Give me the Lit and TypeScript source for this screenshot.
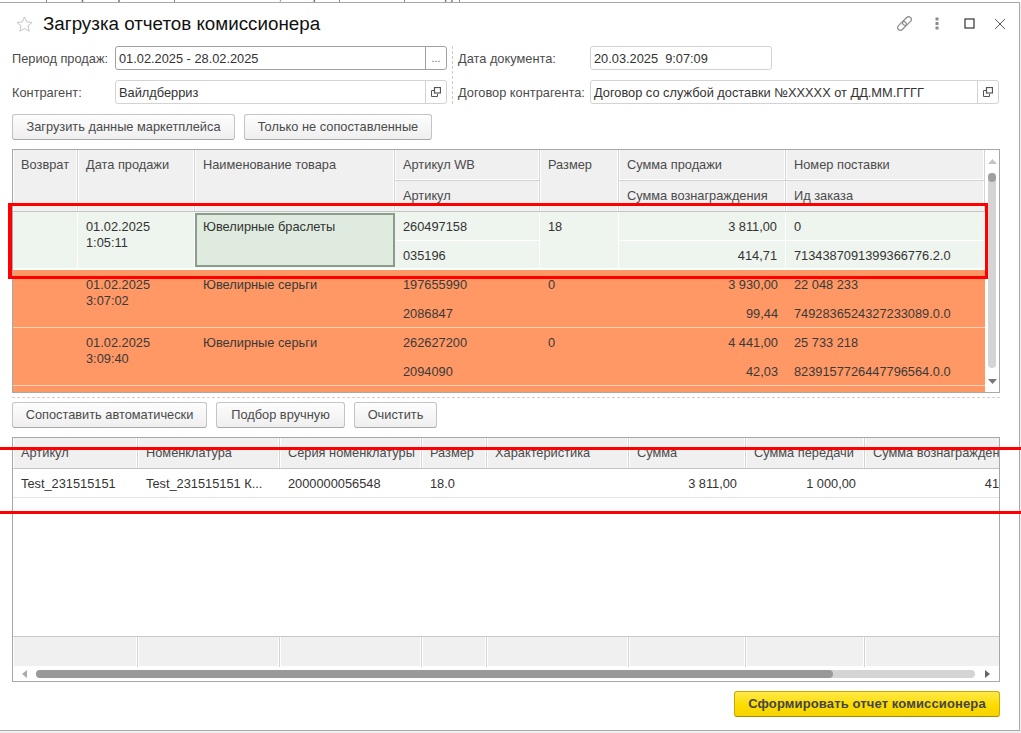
import { LitElement, html, css, svg } from "lit";
import { customElement } from "lit/decorators.js";

const COLS1 = [65, 117, 200, 145, 79, 167, 199];
const COLS2 = [125, 142, 142, 65, 142, 117, 119, 168];

type Row = { date: [string, string]; name: string; a: string; b: string; size: string; s1: string; s2: string; n: string; id: string; cls: string };
const ROWS: Row[] = [
  { date: ["01.02.2025", "1:05:11"], name: "Ювелирные браслеты", a: "260497158", b: "035196", size: "18", s1: "3 811,00", s2: "414,71", n: "0", id: "7134387091399366776.2.0", cls: "sel" },
  { date: ["01.02.2025", "3:07:02"], name: "Ювелирные серьги", a: "197655990", b: "2086847", size: "0", s1: "3 930,00", s2: "99,44", n: "22 048 233", id: "7492836524327233089.0.0", cls: "or" },
  { date: ["01.02.2025", "3:09:40"], name: "Ювелирные серьги", a: "262627200", b: "2094090", size: "0", s1: "4 441,00", s2: "42,03", n: "25 733 218", id: "8239157726447796564.0.0", cls: "or" },
];

const openIcon = svg`<svg width="10" height="10" viewBox="0 0 10 10" fill="none" stroke="#555" stroke-width="1"><rect x="3.5" y="0.5" width="6" height="5.5" stroke-width="1.2"/><path d="M3 3.5H0.5V9.5H6.5V7"/></svg>`;

@customElement("app-root")
export class AppRoot extends LitElement {
  static styles = css`
    :host { display: block; width: 1021px; height: 733px; overflow: hidden; position: relative; background: #f0f0f0; font: 12.8px/16px "Liberation Sans", Arial, sans-serif; color: #4b4b4b; }
    * { box-sizing: border-box; }
    .tabs { height: 2px; background: #fff; overflow: hidden; display: flex; align-items: flex-end; font-size: 13px; line-height: 13px; color: #555; }
    .tabs span { flex: none; padding: 0 10px; border-right: 1px solid #888; height: 13px; white-space: nowrap; overflow: hidden; }
    .win { width: 1020px; height: 729px; background: #fff; border-top: 1px solid #a8a8a8; border-right: 1px solid #a8a8a8; border-bottom: 1px solid #a8a8a8; padding: 0 19px 0 12px; display: flex; flex-direction: column; }
    .head { height: 43px; display: flex; align-items: center; flex: none; }
    .star { margin: 0 10px 2px 4px; flex: none; }
    h1 { margin: 0 0 2px; font-weight: 400; font-size: 18.8px; line-height: 24px; color: #111; flex: 1; }
    .acts { display: flex; align-items: center; margin-right: -6px; margin-bottom: 2px; }
    .form { display: flex; flex: none; height: 58px; }
    .col { display: flex; flex-direction: column; gap: 10px; }
    .frow { display: flex; align-items: center; height: 24px; }
    .lbl { flex: none; padding-top: 1px; }
    .l1 { width: 103px; }
    .l2 { width: 132px; }
    .sep { width: 0; border-left: 1px dashed #ccc; margin: 0 5px 0 5px; height: 58px; }
    .inp { height: 24px; border: 1px solid #d3d3d3; border-radius: 3px; background: #fff; display: flex; align-items: center; color: #333; }
    .inp.foc { border-color: #a0a0a0; }
    .inp .t { flex: 1; padding: 1px 0 0 3px; white-space: pre; }
    .inp .b { flex: none; width: 21px; height: 22px; border-left: 1px solid #d3d3d3; display: flex; align-items: center; justify-content: center; color: #666; font-size: 11px; }
    .inp.foc .b { border-left-color: #a0a0a0; }
    .btns { display: flex; gap: 9px; flex: none; }
    .btn { height: 26px; border: 1px solid #c4c4c4; border-bottom-color: #a8a8a8; border-radius: 3px; background: linear-gradient(#fdfdfd, #efefef); display: flex; align-items: center; justify-content: center; color: #4b4b4b; flex: none; }
    .b1 { margin-top: 10px; }
    .tbl { flex: none; border: 1px solid #a8a8a8; overflow: hidden; background: #fff; }
    .t1 { margin-top: 9px; height: 244px; display: flex; }
    .t1main { width: 972px; flex: none; overflow: hidden; background: #ff9864; }
    .grid1 { display: grid; grid-template-columns: ${css([COLS1.map((c) => c + "px").join(" ")] as any)}; }
    .hd { background: #f0f0f0; grid-template-rows: 31px 30px; border-bottom: 1px solid #c4c4c4; height: 62px; }
    .hc { padding: 7px 8px 0; border-right: 1px solid #d4d4d4; box-shadow: inset -1px 0 0 #fff, inset 1px 0 0 #fff; white-space: nowrap; overflow: hidden; }
    .hc.span { grid-row: span 2; }
    .hc.top { border-bottom: 1px solid #d4d4d4; box-shadow: inset -1px 0 0 #fff, inset 1px 0 0 #fff, inset 0 -1px 0 #fff; }
    .row { grid-template-rows: 29px 29px; height: 58px; color: #3a3a3a; }
    .row.sel { background: #eef4ee; border-bottom: 2px solid #fff; color: #333; grid-template-rows: 29px 27px; }
    .row.or { background: #ff9864; border-bottom: 1px solid #ffd0b4; }
    .c { padding: 7px 8px 0; white-space: nowrap; overflow: hidden; }
    .c.span { grid-row: span 2; white-space: normal; }
    .c.r { text-align: right; }
    .sel .c { border-right: 1px solid #fff; }
    .sel .c.line { border-bottom: 1px solid #fff; }
    .sel .c.foc { background: #dfebdf; border: 2px solid #8a9c8a; padding: 4px 7px 0 6px; margin: 1px 0 1px 0; }
    .vs { flex: 1; display: flex; flex-direction: column; align-items: flex-start; background: #fff; padding: 9px 0 0 3px; }
    .vs svg { flex: none; }
    .track { width: 8px; height: 195px; margin-top: 9px; background: #d4d4d4; border-radius: 4px; flex: none; }
    .thumb { width: 8px; height: 9px; background: #a0a0a0; border-radius: 4px; }
    .dash { flex: none; height: 0; border-top: 1px dashed #d0d0d0; margin-top: 4px; }
    .b2 { margin-top: 4px; }
    .t2 { margin-top: 9px; height: 245px; display: flex; flex-direction: column; }
    .grid2 { display: grid; grid-template-columns: ${css([COLS2.map((c) => c + "px").join(" ")] as any)}; width: 1020px; flex: none; }
    .h2 { height: 31px; background: #f0f0f0; border-bottom: 1px solid #c4c4c4; }
    .d2 { height: 29px; border-bottom: 1px solid #e4e4e4; color: #333; }
    .d2 .c.r { padding-right: 9px; }
    .fill { flex: 1; }
    .f2 { height: 30px; background: #f0f0f0; border-top: 1px solid #c8c8c8; }
    .f2 .hc { height: 30px; }
    .hs { flex: none; height: 15px; display: flex; align-items: center; padding-left: 9px; }
    .htrack { margin: 0 10px 0 9px; width: 939px; height: 8px; border-radius: 4px; background: #d4d4d4; flex: none; }
    .hthumb { width: 797px; height: 8px; border-radius: 4px; background: #999; }
    .foot { margin-top: 9px; display: flex; justify-content: flex-end; flex: none; }
    .ybtn { width: 266px; height: 26px; border: 1px solid #c8ab00; border-bottom-color: #a58c00; border-radius: 3px; background: linear-gradient(#ffe94a, #fcdc00 55%, #f5d400); display: flex; align-items: center; justify-content: center; color: #454545; font-weight: 700; font-size: 13px; letter-spacing: 0.13px; }
    .red { position: absolute; pointer-events: none; }
    .rbox { left: 8px; top: 203px; width: 980px; height: 76px; border: 3px solid #f00; border-left-width: 4px; }
    .rl { left: 0; width: 1021px; height: 3px; background: #f00; }
    .rl.a { top: 447px; }
    .rl.b { top: 511px; }
  `;

  private btn(t: string, w: number) {
    return html`<div class="btn" style="width:${w}px">${t}</div>`;
  }

  render() {
    return html`
      <div class="tabs">
        <span style="width:47px">Отчеты</span><span style="width:128px">Сбор и обработка</span><span style="width:165px">Сопоставление, товары</span><span style="width:65px">Остатки</span><span style="width:55px">Склад</span>
      </div>
      <div class="win">
        <div class="head">
          <svg class="star" width="17" height="16" viewBox="0 0 17 16" fill="none" stroke="#c4c4c4" stroke-width="1"><path d="M8.5 1l2.2 4.9 5.3.6-4 3.5 1.2 5.2-4.7-2.7-4.7 2.7 1.2-5.2-4-3.5 5.3-.6z"/></svg>
          <h1>Загрузка отчетов комиссионера</h1>
          <div class="acts">
            <svg width="17" height="17" viewBox="0 0 17 17" fill="none" stroke="#8a8a8a" stroke-width="1.2"><g transform="rotate(-45 8.5 8.5)"><rect x="0" y="5.8" width="10" height="5.4" rx="2.7"/><rect x="7" y="5.8" width="10" height="5.4" rx="2.7"/></g></svg>
            <svg style="margin-left:22px" width="4" height="13" viewBox="0 0 4 13" fill="#8a8a8a"><rect x="0.5" y="0.5" width="3" height="3"/><rect x="0.5" y="5" width="3" height="3"/><rect x="0.5" y="9.5" width="3" height="3"/></svg>
            <svg style="margin-left:25px" width="11" height="11" viewBox="0 0 11 11" fill="none" stroke="#333" stroke-width="1.2"><rect x="1" y="1" width="9" height="9"/></svg>
            <svg style="margin-left:19px" width="12" height="12" viewBox="0 0 12 12" fill="none" stroke="#555" stroke-width="1"><path d="M1 1l10 10M11 1L1 11"/></svg>
          </div>
        </div>
        <div class="form">
          <div class="col">
            <div class="frow"><span class="lbl l1">Период продаж:</span>
              <div class="inp foc" style="width:332px"><span class="t">01.02.2025 - 28.02.2025</span><span class="b">...</span></div></div>
            <div class="frow"><span class="lbl l1">Контрагент:</span>
              <div class="inp" style="width:332px"><span class="t">Вайлдберриз</span><span class="b">${openIcon}</span></div></div>
          </div>
          <div class="sep"></div>
          <div class="col">
            <div class="frow"><span class="lbl l2">Дата документа:</span>
              <div class="inp" style="width:182px"><span class="t">20.03.2025  9:07:09</span></div></div>
            <div class="frow"><span class="lbl l2">Договор контрагента:</span>
              <div class="inp" style="width:409px"><span class="t">Договор со службой доставки №XXXXX от ДД.ММ.ГГГГ</span><span class="b">${openIcon}</span></div></div>
          </div>
        </div>
        <div class="btns b1">${this.btn("Загрузить данные маркетплейса", 223)}${this.btn("Только не сопоставленные", 188)}</div>

        <div class="tbl t1">
          <div class="t1main">
            <div class="grid1 hd">
              <div class="hc span">Возврат</div>
              <div class="hc span">Дата продажи</div>
              <div class="hc span">Наименование товара</div>
              <div class="hc top">Артикул WB</div>
              <div class="hc span">Размер</div>
              <div class="hc top">Сумма продажи</div>
              <div class="hc top">Номер поставки</div>
              <div class="hc" style="grid-column:4">Артикул</div>
              <div class="hc" style="grid-column:6">Сумма вознаграждения</div>
              <div class="hc" style="grid-column:7">Ид заказа</div>
            </div>
            ${ROWS.map((r) => html`
              <div class="grid1 row ${r.cls}">
                <div class="c span"></div>
                <div class="c span">${r.date[0]}<br />${r.date[1]}</div>
                <div class="c span ${r.cls === "sel" ? "foc" : ""}">${r.name}</div>
                <div class="c line">${r.a}</div>
                <div class="c span">${r.size}</div>
                <div class="c r line">${r.s1}</div>
                <div class="c line">${r.n}</div>
                <div class="c" style="grid-column:4">${r.b}</div>
                <div class="c r" style="grid-column:6">${r.s2}</div>
                <div class="c" style="grid-column:7">${r.id}</div>
              </div>`)}
          </div>
          <div class="vs">
            <svg width="9" height="5" viewBox="0 0 9 5" fill="#c4c4c4"><path d="M4.5 0L9 5H0z"/></svg>
            <div class="track"><div class="thumb"></div></div>
            <svg style="margin-top:11px" width="9" height="5" viewBox="0 0 9 5" fill="#777"><path d="M0 0h9L4.5 5z"/></svg>
          </div>
        </div>

        <div class="dash"></div>
        <div class="btns b2">${this.btn("Сопоставить автоматически", 195)}${this.btn("Подбор вручную", 129)}${this.btn("Очистить", 83)}</div>

        <div class="tbl t2">
          <div class="grid2 h2">
            ${["Артикул", "Номенклатура", "Серия номенклатуры", "Размер", "Характеристика", "Сумма", "Сумма передачи", "Сумма вознаграждения"].map((t) => html`<div class="hc">${t}</div>`)}
          </div>
          <div class="grid2 d2">
            <div class="c">Test_231515151</div>
            <div class="c">Test_231515151 К...</div>
            <div class="c">2000000056548</div>
            <div class="c">18.0</div>
            <div class="c"></div>
            <div class="c r">3 811,00</div>
            <div class="c r">1 000,00</div>
            <div class="c r">414,71</div>
          </div>
          <div class="fill"></div>
          <div class="grid2 f2">${COLS2.map(() => html`<div class="hc"></div>`)}</div>
          <div class="hs">
            <svg width="5" height="8" viewBox="0 0 5 8" fill="#aaa"><path d="M5 0v8L0 4z"/></svg>
            <div class="htrack"><div class="hthumb"></div></div>
            <svg width="5" height="8" viewBox="0 0 5 8" fill="#666"><path d="M0 0v8l5-4z"/></svg>
          </div>
        </div>

        <div class="foot"><div class="ybtn">Сформировать отчет комиссионера</div></div>
      </div>
      <div class="red rbox"></div>
      <div class="red rl a"></div>
      <div class="red rl b"></div>
    `;
  }
}
